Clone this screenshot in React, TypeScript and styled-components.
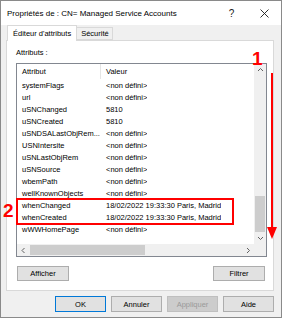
import React from "react";
import styled, { createGlobalStyle } from "styled-components";

const GlobalStyle = createGlobalStyle`
  html, body {
    margin: 0;
    padding: 0;
    background: #ffffff;
  }
  body {
    font-family: "Liberation Sans", Arial, sans-serif;
    color: #000;
  }
`;

const RED = "#ff0000";

const Window = styled.div`
  position: relative;
  box-sizing: border-box;
  width: 282px;
  height: 318px;
  border: 1px solid #8a8a8a;
  background: #f0f0f0;
  display: flex;
  flex-direction: column;
  overflow: hidden;
`;

const TitleBar = styled.div`
  height: 24px;
  flex: none;
  display: flex;
  align-items: center;
  background: #ffffff;
  padding-left: 6px;
`;

const Title = styled.div`
  flex: 1;
  font-size: 8px;
  white-space: nowrap;
`;

const TitleButton = styled.div`
  width: 33px;
  height: 24px;
  display: flex;
  align-items: center;
  justify-content: center;
  font-size: 10px;
  color: #1a1a1a;
`;

const TabStrip = styled.div`
  height: 16px;
  flex: none;
  display: flex;
  align-items: flex-end;
  padding-left: 6px;
  position: relative;
  z-index: 1;
`;

const Tab = styled.div<{ $active?: boolean }>`
  box-sizing: border-box;
  height: ${(p) => (p.$active ? "16px" : "13px")};
  margin-bottom: ${(p) => (p.$active ? "0" : "1px")};
  padding: ${(p) => (p.$active ? "0 5px" : "0 3px 0 4px")};
  display: flex;
  align-items: center;
  font-size: 7.5px;
  white-space: nowrap;
  background: ${(p) => (p.$active ? "#ffffff" : "#f0f0f0")};
  border: 1px solid #d9d9d9;
  border-bottom: ${(p) => (p.$active ? "none" : "1px solid #d9d9d9")};
  border-left: ${(p) => (p.$active ? "1px solid #d9d9d9" : "none")};
`;

const Panel = styled.div`
  box-sizing: border-box;
  margin: -1px 7px 0 5px;
  height: 251px;
  flex: none;
  background: #ffffff;
  border: 1px solid #d9d9d9;
  padding: 6px 7px 9px 9px;
  display: flex;
  flex-direction: column;
`;

const Label = styled.div`
  font-size: 7.5px;
  line-height: 11px;
  height: 11px;
`;

const ListBox = styled.div`
  box-sizing: border-box;
  margin-top: 5px;
  height: 194px;
  width: 251px;
  border: 1px solid #828790;
  display: grid;
  grid-template-columns: 1fr 12px;
  grid-template-rows: 1fr 12px;
`;

const ListContent = styled.div`
  overflow: hidden;
`;

const HeaderRow = styled.div`
  height: 15px;
  display: flex;
  font-size: 7.5px;
  align-items: center;
`;

const HeaderCell = styled.div<{ $first?: boolean }>`
  box-sizing: border-box;
  height: 15px;
  display: flex;
  align-items: center;
  width: ${(p) => (p.$first ? "84px" : "auto")};
  padding-left: 5px;
  border-right: ${(p) => (p.$first ? "1px solid #e5e5e5" : "none")};
`;

const Row = styled.div`
  height: 12px;
  display: flex;
  align-items: center;
  font-size: 7.5px;
  white-space: nowrap;
`;

const Cell = styled.div<{ $first?: boolean }>`
  box-sizing: border-box;
  width: ${(p) => (p.$first ? "84px" : "auto")};
  padding-left: 5px;
  overflow: hidden;
`;

const VScroll = styled.div`
  background: #f0f0f0;
  display: flex;
  flex-direction: column;
`;

const HScroll = styled.div`
  background: #f0f0f0;
  display: flex;
`;

const Corner = styled.div`
  background: #f0f0f0;
`;

const ArrowBox = styled.div`
  width: 12px;
  height: 12px;
  flex: none;
  display: flex;
  align-items: center;
  justify-content: center;
`;

const Track = styled.div<{ $horizontal?: boolean }>`
  flex: 1;
  display: flex;
  flex-direction: ${(p) => (p.$horizontal ? "row" : "column")};
  justify-content: ${(p) => (p.$horizontal ? "flex-start" : "flex-end")};
`;

const Thumb = styled.div<{ $horizontal?: boolean; $size: number }>`
  background: #cdcdcd;
  ${(p) =>
    p.$horizontal
      ? `width: ${p.$size}px; margin: 1px 0 1px 1px;`
      : `height: ${p.$size}px; margin: 0 1px;`}
`;

const ButtonRow = styled.div`
  margin-top: 9px;
  display: flex;
  justify-content: space-between;
  padding-left: 1px;
  padding-right: 1px;
`;

const Button = styled.div<{ $primary?: boolean; $disabled?: boolean }>`
  box-sizing: border-box;
  width: 52px;
  height: 15px;
  display: flex;
  align-items: center;
  justify-content: center;
  font-size: 7.5px;
  background: ${(p) => (p.$disabled ? "#cccccc" : "#e1e1e1")};
  color: ${(p) => (p.$disabled ? "#9a9a9a" : "#000")};
  border: 1px solid
    ${(p) => (p.$primary ? "#0078d7" : p.$disabled ? "#bfbfbf" : "#adadad")};
`;

const Footer = styled.div`
  flex: 1;
  display: flex;
  justify-content: flex-end;
  align-items: flex-start;
  gap: 5px;
  padding: 5px 7px 0 0;
`;

const FooterButton = styled(Button)`
  width: 51px;
  height: 16px;
`;

const Annotation = styled.div<{ $x: number; $y: number }>`
  position: absolute;
  left: ${(p) => p.$x - 1}px;
  top: ${(p) => p.$y - 1}px;
  color: ${RED};
  font-family: "Liberation Sans", Arial, sans-serif;
  font-weight: bold;
  font-size: 19px;
  line-height: 19px;
  z-index: 5;
`;

const Highlight = styled.div`
  position: absolute;
  left: 15px;
  top: 197px;
  width: 218px;
  height: 27px;
  box-sizing: border-box;
  border: 2px solid ${RED};
  z-index: 5;
`;

const ArrowSvg = styled.svg`
  position: absolute;
  left: 264px;
  top: 71px;
  z-index: 5;
`;

const Chevron = ({ dir }: { dir: "up" | "down" | "left" | "right" }) => {
  const paths: Record<string, string> = {
    up: "M1 4 L3.5 1.5 L6 4",
    down: "M1 2 L3.5 4.5 L6 2",
    left: "M4.5 1 L2 3.5 L4.5 6",
    right: "M2 1 L4.5 3.5 L2 6",
  };
  return (
    <svg width="7" height="7" viewBox="0 0 7 7">
      <path d={paths[dir]} fill="none" stroke="#606060" strokeWidth="1" />
    </svg>
  );
};

const rows: [string, string][] = [
  ["systemFlags", "<non défini>"],
  ["url", "<non défini>"],
  ["uSNChanged", "5810"],
  ["uSNCreated", "5810"],
  ["uSNDSALastObjRem...", "<non défini>"],
  ["USNIntersite", "<non défini>"],
  ["uSNLastObjRem", "<non défini>"],
  ["uSNSource", "<non défini>"],
  ["wbemPath", "<non défini>"],
  ["wellKnownObjects", "<non défini>"],
  ["whenChanged", "18/02/2022 19:33:30 Paris, Madrid"],
  ["whenCreated", "18/02/2022 19:33:30 Paris, Madrid"],
  ["wWWHomePage", "<non défini>"],
];

export default function App() {
  return (
    <>
      <GlobalStyle />
      <Window>
        <TitleBar>
          <Title>Propriétés de : CN= Managed Service Accounts</Title>
          <TitleButton>?</TitleButton>
          <TitleButton>
            <svg width="9" height="9" viewBox="0 0 9 9">
              <path d="M0.5 0.5 L8.5 8.5 M8.5 0.5 L0.5 8.5" stroke="#1a1a1a" strokeWidth="0.9" />
            </svg>
          </TitleButton>
        </TitleBar>
        <TabStrip>
          <Tab $active>Éditeur d'attributs</Tab>
          <Tab>Sécurité</Tab>
        </TabStrip>
        <Panel>
          <Label>Attributs :</Label>
          <ListBox>
            <ListContent>
              <HeaderRow>
                <HeaderCell $first>Attribut</HeaderCell>
                <HeaderCell>Valeur</HeaderCell>
              </HeaderRow>
              {rows.map(([name, value]) => (
                <Row key={name}>
                  <Cell $first>{name}</Cell>
                  <Cell>{value}</Cell>
                </Row>
              ))}
            </ListContent>
            <VScroll>
              <ArrowBox>
                <Chevron dir="up" />
              </ArrowBox>
              <Track>
                <Thumb $size={36} />
              </Track>
              <ArrowBox>
                <Chevron dir="down" />
              </ArrowBox>
            </VScroll>
            <HScroll>
              <ArrowBox>
                <Chevron dir="left" />
              </ArrowBox>
              <Track $horizontal>
                <Thumb $horizontal $size={115} />
              </Track>
              <ArrowBox>
                <Chevron dir="right" />
              </ArrowBox>
            </HScroll>
            <Corner />
          </ListBox>
          <ButtonRow>
            <Button>Afficher</Button>
            <Button>Filtrer</Button>
          </ButtonRow>
        </Panel>
        <Footer>
          <FooterButton $primary>OK</FooterButton>
          <FooterButton>Annuler</FooterButton>
          <FooterButton $disabled>Appliquer</FooterButton>
          <FooterButton>Aide</FooterButton>
        </Footer>

        <Annotation $x={252} $y={49}>1</Annotation>
        <Annotation $x={3} $y={201}>2</Annotation>
        <Highlight />
        <ArrowSvg width="14" height="170" viewBox="0 0 14 170">
          <rect x="6" y="1" width="2" height="157" fill={RED} />
          <path d="M2 155 L12 155 L7 167 Z" fill={RED} />
        </ArrowSvg>
      </Window>
    </>
  );
}
